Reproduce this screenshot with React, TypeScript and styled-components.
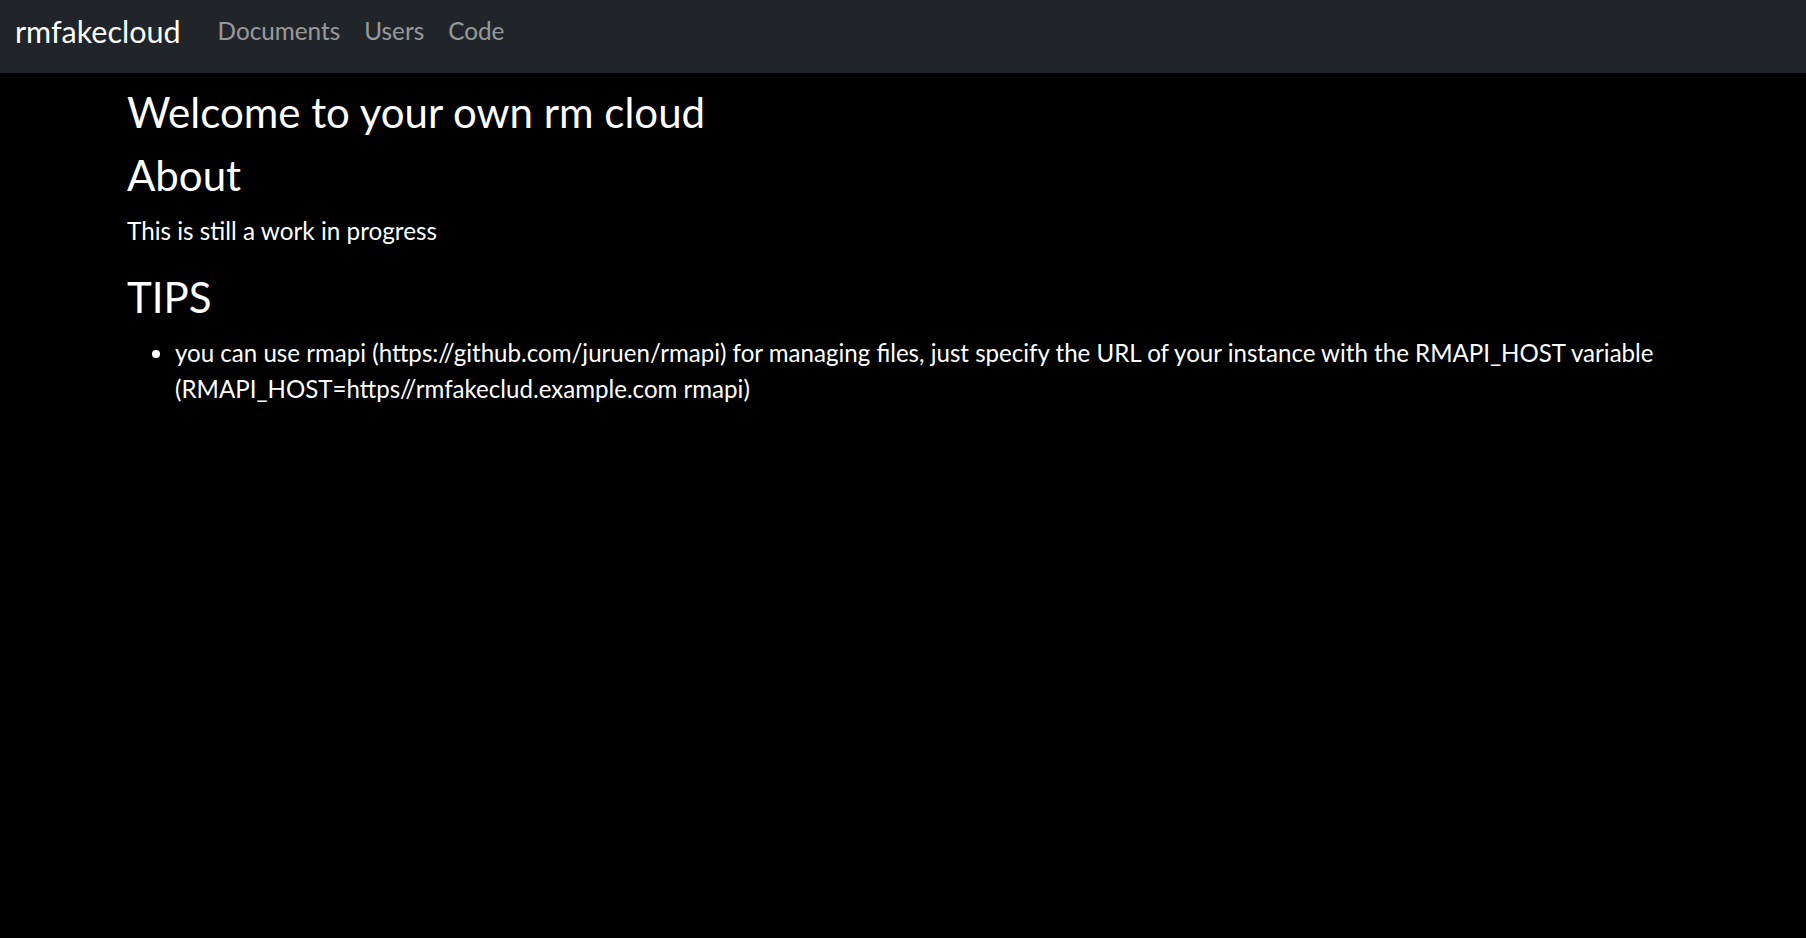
import React from "react";
import styled, { createGlobalStyle } from "styled-components";

const Global = createGlobalStyle`
  html, body { margin: 0; padding: 0; background: #000; }
  body {
    font-family: "Lato", "Open Sans", sans-serif;
    color: #fff;
    font-size: 24px;
    line-height: 36px;
  }
  * { box-sizing: border-box; }
`;

const Page = styled.div`
  min-height: 938px;
  background: #000;
`;

const NavBar = styled.nav`
  height: 73px;
  background: #212529;
  display: flex;
  align-items: center;
  padding: 0 15px 12px;
`;

const Brand = styled.a`
  font-size: 30.5px;
  line-height: 36px;
  color: #fff;
  text-decoration: none;
  margin-right: 37px;
`;

const NavLinks = styled.div`
  display: flex;
  align-items: center;
  gap: 24px;
  margin-top: -1px;
`;

const NavLink = styled.a`
  font-size: 24.3px;
  line-height: 29px;
  color: rgba(255, 255, 255, 0.55);
  text-decoration: none;
`;

const Main = styled.main`
  padding: 14px 127px 0;
`;

const Heading = styled.h1`
  font-size: 42px;
  font-weight: 400;
  line-height: 50px;
  margin: 0 0 13px;
`;

const Paragraph = styled.p`
  font-size: 24.3px;
  margin: 0 0 23px;
`;

const List = styled.ul`
  margin: 0;
  padding-left: 48px;
  font-size: 24.1px;
`;

export default function App() {
  return (
    <Page>
      <Global />
      <NavBar>
        <Brand href="#">rmfakecloud</Brand>
        <NavLinks>
          <NavLink href="#">Documents</NavLink>
          <NavLink href="#">Users</NavLink>
          <NavLink href="#">Code</NavLink>
        </NavLinks>
      </NavBar>
      <Main>
        <Heading>Welcome to your own rm cloud</Heading>
        <Heading as="h2">About</Heading>
        <Paragraph>This is still a work in progress</Paragraph>
        <Heading as="h2">TIPS</Heading>
        <List>
          <li>
            you can use rmapi (https://github.com/juruen/rmapi) for managing files, just specify the URL of your instance
            with the RMAPI_HOST variable (RMAPI_HOST=https//rmfakeclud.example.com rmapi)
          </li>
        </List>
      </Main>
    </Page>
  );
}
